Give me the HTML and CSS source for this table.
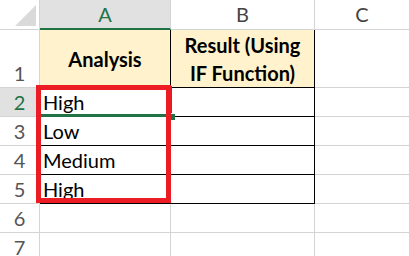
FILE: index.html
```html
<!DOCTYPE html>
<html>
<head>
<meta charset="utf-8">
<link rel="stylesheet" href="styles.css">
</head>
<body>
<div class="sheet">
  <div class="grid">
    <div class="corner"><span class="tri"></span></div>
    <div class="colhdr sel">A</div>
    <div class="colhdr">B</div>
    <div class="colhdr">C</div>

    <div class="rowhdr">1</div>
    <div class="cell head t-left">Analysis</div>
    <div class="cell head t-right">Result (Using<br>IF Function)</div>
    <div class="cell"></div>

    <div class="rowhdr sel">2</div>
    <div class="cell data t-left active">High</div>
    <div class="cell data t-right"></div>
    <div class="cell"></div>

    <div class="rowhdr">3</div>
    <div class="cell data t-left">Low</div>
    <div class="cell data t-right"></div>
    <div class="cell"></div>

    <div class="rowhdr">4</div>
    <div class="cell data t-left">Medium</div>
    <div class="cell data t-right"></div>
    <div class="cell"></div>

    <div class="rowhdr">5</div>
    <div class="cell data t-left">High</div>
    <div class="cell data t-right"></div>
    <div class="cell"></div>

    <div class="rowhdr">6</div>
    <div class="cell"></div>
    <div class="cell"></div>
    <div class="cell"></div>

    <div class="rowhdr">7</div>
    <div class="cell"></div>
    <div class="cell"></div>
    <div class="cell"></div>
  </div>
  <div class="redbox"></div>
</div>
</body>
</html>
```

FILE: styles.css
```css
* { box-sizing: border-box; }
html, body {
  margin: 0;
  padding: 0;
  background: #ffffff;
  overflow: hidden;
}
body {
  width: 409px;
  height: 256px;
  font-family: "Lato", "Open Sans", sans-serif;
  font-size: 20px;
  color: #000;
}
.sheet {
  position: relative;
  width: 409px;
  height: 256px;
  overflow: hidden;
}
.grid {
  display: grid;
  grid-template-columns: 40px 131px 144px 95px;
  grid-template-rows: 30px 58px repeat(6, 29px);
}
.grid > div {
  border-right: 1px solid #d4d4d4;
  border-bottom: 1px solid #d4d4d4;
}
.corner {
  position: relative;
  background: #ffffff;
}
.tri {
  position: absolute;
  left: 15px;
  top: 5px;
  width: 21px;
  height: 21px;
  background: #dadada;
  clip-path: polygon(100% 0, 100% 100%, 0 100%);
}
.colhdr {
  display: flex;
  justify-content: center;
  align-items: flex-start;
  padding-top: 1px;
  line-height: 27px;
  color: #444444;
  background: #ffffff;
}
.colhdr.sel {
  background: #e1e1e1;
  color: #217346;
  border-bottom: 2px solid #217346 !important;
}
.rowhdr {
  display: flex;
  justify-content: center;
  align-items: flex-end;
  line-height: 27px;
  color: #555555;
  background: #ffffff;
}
.rowhdr.sel {
  background: #e1e1e1;
  color: #217346;
}
.cell {
  position: relative;
  display: flex;
  align-items: flex-end;
  line-height: 28px;
  padding-left: 3px;
  white-space: nowrap;
}
.cell.head {
  background: #fff2cc;
  font-weight: 700;
  justify-content: center;
  align-items: center;
  text-align: center;
  padding-left: 0;
}
.grid > .t-left,
.grid > .t-right {
  border-right-color: #000000;
  border-bottom-color: #000000;
}
.cell.active::after {
  content: "";
  position: absolute;
  top: -2px;
  left: -2px;
  right: -2px;
  bottom: -1px;
  border: 3px solid #217346;
}
.cell.active::before {
  content: "";
  position: absolute;
  right: -5px;
  bottom: -4px;
  width: 6px;
  height: 6px;
  background: #217346;
  border-left: 1px solid #ffffff;
  border-top: 1px solid #ffffff;
  z-index: 2;
}
.redbox {
  position: absolute;
  left: 36px;
  top: 85px;
  width: 135px;
  height: 118px;
  border: 5px solid #ec1c24;
  z-index: 3;
}
```
